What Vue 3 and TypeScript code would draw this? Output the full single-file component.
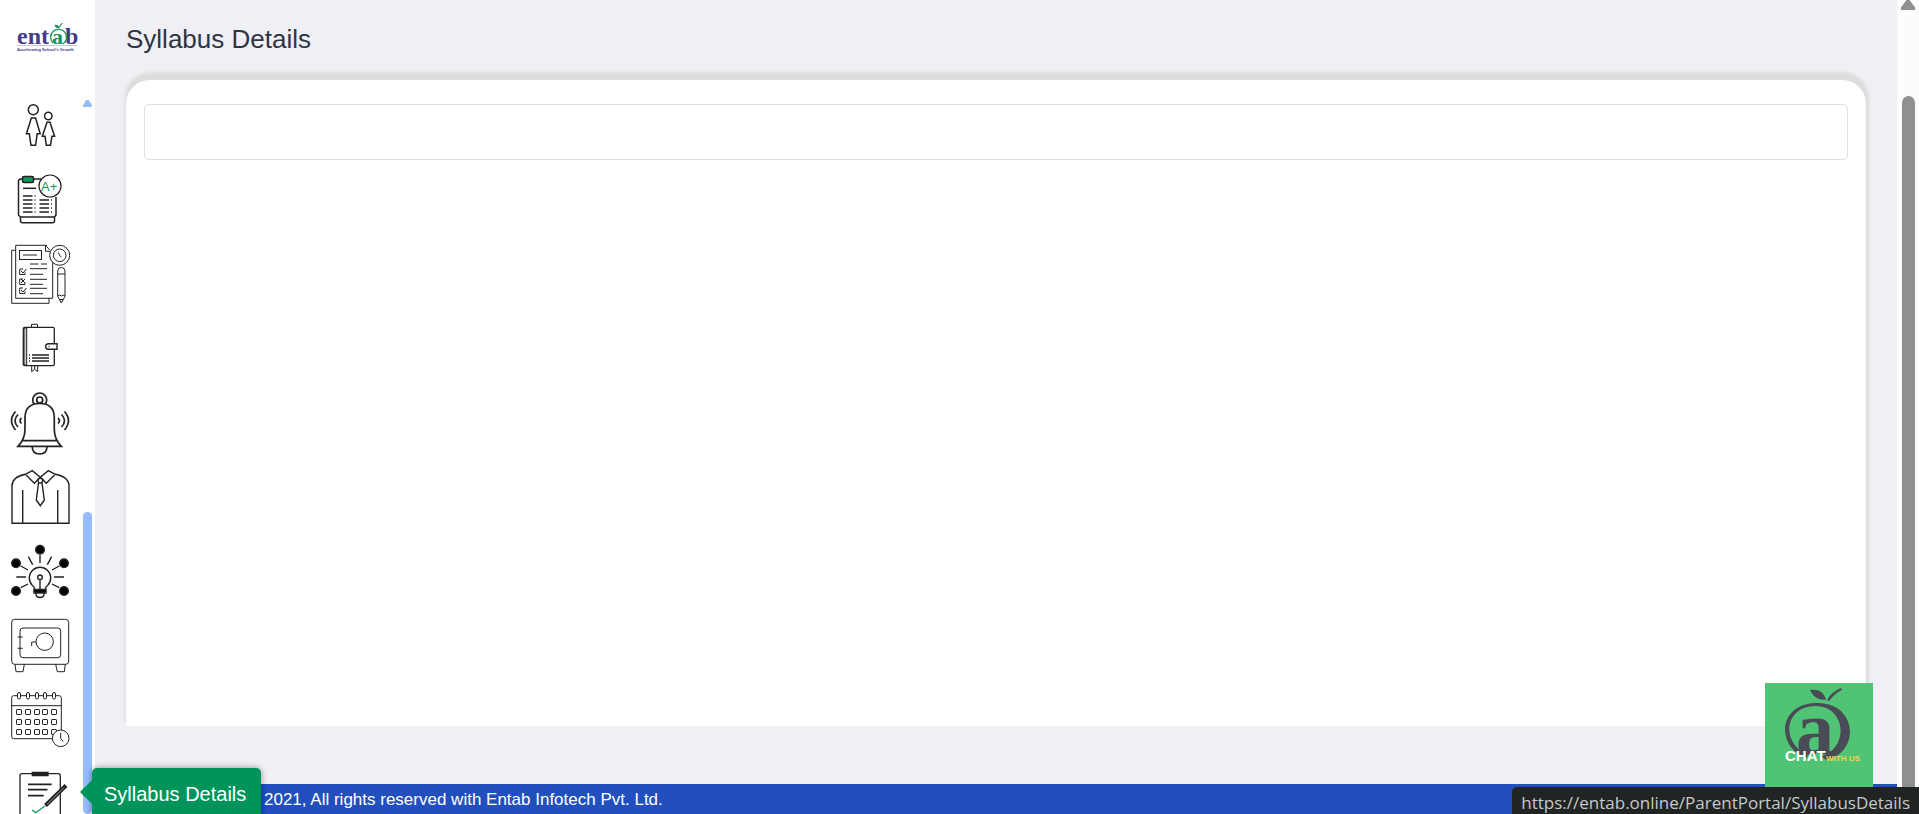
<script setup lang="ts">
interface MenuItem {
  id: string
  label: string
}

const items: MenuItem[] = [
  { id: 'siblings', label: 'Siblings' },
  { id: 'result', label: 'Exam Result' },
  { id: 'schedule', label: 'Exam Schedule' },
  { id: 'diary', label: 'Diary' },
  { id: 'notice', label: 'Notifications' },
  { id: 'uniform', label: 'Uniform' },
  { id: 'ideas', label: 'Activities' },
  { id: 'locker', label: 'Locker' },
  { id: 'calendar', label: 'Calendar' },
  { id: 'syllabus', label: 'Syllabus Details' },
]

const ringX: number[] = [9, 18, 27, 35, 44]
const dayRows: number[] = [28, 38, 48]
const resultRows: number[] = [34, 38, 42, 46, 50]
</script>

<template>
  <div class="portal">
    <aside class="sidebar">
      <a class="logo" href="#" aria-label="Entab home">
        <svg width="64" height="32" viewBox="0 0 64 32">
          <g font-family="'Liberation Serif', serif" font-weight="bold" font-size="24">
            <text x="0" y="21" fill="#463a8c">ent</text>
            <text x="35" y="21" fill="#17955a" font-size="22">a</text>
            <text x="48" y="21" fill="#463a8c">b</text>
          </g>
          <path d="M36 20a8 8 0 1 1 10 1" fill="none" stroke="#17955a" stroke-width="1.3" />
          <path d="M42 5q-4 0-4-3 4 0 4 3q1-4 4-5" fill="#17955a" stroke="#17955a" stroke-width=".8" />
          <path d="M0 22.5h61" stroke="#b5aed6" stroke-width=".7" />
          <text x="0" y="28" fill="#463a8c" font-family="'Liberation Sans', sans-serif" font-weight="bold" font-size="4">Accelerating School's Growth</text>
        </svg>
      </a>
      <nav class="menu">
        <a v-for="item in items" :key="item.id" class="menu-item" href="#" :aria-label="item.label">
          <svg class="icon" viewBox="0 0 60 74">
            <g v-if="item.id === 'siblings'" stroke-width="1.5">
              <circle cx="23.3" cy="21.7" r="5" />
              <path d="M21.3 30h4.3l4.6 15.7h-3l-1.6 11.6H21l-1.7-11.600h-2.800z" />
              <circle cx="38.3" cy="28" r="3.7" />
              <path d="M37 34.300h3l4.600 14H42l-1.500 9h-4.200l-1.300-9h-2.700z" />
            </g>
            <g v-else-if="item.id === 'result'" stroke-width="1.5">
              <path d="M12 17h-1q-2.500 0-2.500 2.500V53l2 2h34l1.500-2V35M24 17h7M10.500 55v4q0 1.700 2 1.700h30q2 0 2-1.700v-4" />
              <rect x="12.5" y="14.5" width="11" height="6" rx="1.5" fill="#0f9659" />
              <path d="M13 26.300h13" />
              <path v-for="(y, i) in resultRows" :key="y" :d="i ? `M13 ${y}h9.500m2 0h1m4 0h9.500m2 0h1` : `M13 ${y}h9.500m2 0h1`" />
              <circle cx="40" cy="24" r="11" fill="#fff" stroke-width="1.2" />
              <text x="31" y="29" class="grade">A+</text>
            </g>
            <g v-else-if="item.id === 'schedule'">
              <path d="M5.700 13.300h-4v53H39v-5M37 8.300H5.700v53h37V20M35.500 8.300v6h5M35.500 8.300l4.500 5" />
              <rect x="9.5" y="13.5" width="22" height="9" />
              <path d="M13 18h14M20 27h8.500m2.500 0h6M20 31.700h17M20 37.300h13M20 42.300h17M20 47.300h13M20 51.300h17M20 56.700h13" />
              <path d="M13 32H9.700v5.500H15v-2M11 34l2 2 3.500-4M13 42H9.700v5.500H15v-2M11 42l4 4m0-4-4 4M13 51H9.700v5.500H15v-2M11 53l2 2 3.500-4" />
              <circle cx="49.7" cy="18.3" r="10" fill="#fff" />
              <circle cx="49.7" cy="18.3" r="6.3" />
              <path d="M48.500 15.500l1 3 2 1.500" />
              <path d="M47.700 59.300V34q0-3.500 3.600-3.500T55 34v25.300L51.300 66zM47.700 37H55M47.700 59l2-1 1.600 1 1.700-1 2 1M50 62.500h3" />
            </g>
            <g v-else-if="item.id === 'diary'">
              <rect x="13.3" y="16.3" width="31" height="38.4" rx="1.5" stroke-width="1.3" />
              <path d="M14 17h2.700v37H14z" fill="#ccc" />
              <path d="M21.500 16v-2.700h6V16M21.700 55v5.700l3-2.500 3 2.500V55M24.700 55v3" />
              <path d="M47 32.700H38.500a2.800 2.800 0 0 0 0 5.600H47z" fill="#fff" stroke-width="1.4" />
              <path d="M38.500 35.500h1M19 44h1m2 0h17M19 47h1m2 0h17M19 50h1m2 0h17" stroke-width="1.3" />
            </g>
            <g v-else-if="item.id === 'notice'" stroke-width="1.7">
              <circle cx="29.7" cy="14" r="7" />
              <path d="M8 60.300q7-7 7-17V32q0-14.500 14.700-14.500T44.300 32v11.300q0 10 7 17zM11.500 54.700h36" fill="#fff" />
              <circle cx="29.7" cy="14" r="3" />
              <path d="M22.300 61q0 7 7.300 7t7.300-7" />
              <path d="M11.500 32q-3 2.700 0 5.500M8 28.500q-6 6.200 0 12.500M5.500 25.500q-8 9 0 18.500M48 32q3 2.700 0 5.500M51.500 28.500q6 6.200 0 12.500M54.500 25.500q8 9 0 18.500" />
            </g>
            <g v-else-if="item.id === 'uniform'" stroke-width="1.4">
              <path d="M15.300 14.300Q2 17 2 26v37.300h57V26q0-9-13.700-11.700M12.700 30v33M47.700 30v33" />
              <path d="M15.300 14.300l7-3.600 8 6.600-6 6zM45.300 14.300l-7-3.600-8 6.600 6 6z" />
              <path d="M30.300 17.300l-2.600 2.500 1 3.200h3.200l1-3.200zM28.500 23l-2.200 17 4 5.700 4-5.700-2.300-17" />
            </g>
            <g v-else-if="item.id === 'ideas'" stroke-width="1.4">
              <g fill="#000">
                <circle cx="30" cy="14.7" r="4.3" />
                <circle cx="6" cy="28.3" r="4.3" />
                <circle cx="54" cy="28.3" r="4.3" />
                <circle cx="6" cy="56" r="4.3" />
                <circle cx="54" cy="56" r="4.3" />
                <path d="M24 54.500h12v3.500H24z" />
              </g>
              <path d="M30 20v8M18.300 21.700l4.400 8M41.700 21.700l-4.400 8M10.700 31l7.300 4M49.300 31 42 35M6.300 42H16M44 42h10M10.700 52.700 18 49M49.300 52.700 42 49" />
              <path d="M24.500 54q0-2-2.500-4a10.700 10.700 0 1 1 16 0q-2.500 2-2.500 4M26 58.500q0 4 4 4t4-4M30 45v9" />
              <circle cx="30" cy="42.3" r="2.3" />
            </g>
            <g v-else-if="item.id === 'locker'">
              <rect x="1.7" y="10.3" width="57" height="45" rx="3" />
              <rect x="10" y="19" width="40.7" height="29.7" rx="3" />
              <circle cx="34.7" cy="32.7" r="8.7" />
              <path d="M21.700 37v-4H26M7.700 28h5M7.700 39.300h5M5 55.300l1 7.400h7l1.300-7.400M45.700 55.300l1.600 7.400h7l1-7.400" />
            </g>
            <g v-else-if="item.id === 'calendar'">
              <rect x="1.7" y="11.7" width="49.6" height="43" rx="2" />
              <path d="M1.700 21.700h49.600" />
              <rect v-for="x in ringX" :key="x" :x="x - 1.5" y="8.5" width="3" height="6.5" rx="1.5" fill="#fff" />
              <template v-for="y in dayRows" :key="y">
                <rect v-for="x in ringX" :key="x" :x="x - 2.5" :y="y - 2.5" width="5" height="5" rx=".6" />
              </template>
              <circle cx="50.7" cy="54.3" r="8.3" fill="#fff" />
              <path d="M50.700 49v5.500l2.500 3" />
            </g>
            <g v-else stroke-width="1.3">
              <rect x="10" y="15.7" width="40.3" height="54" rx="2" />
              <path d="M22.300 14.500H38v3H22.300z" fill="#222" />
              <path d="M18 26.300h23.700M18 31.700h19.500M18 37.700h15.700" stroke-width="1.7" />
              <path d="M22.300 52l3.400 2.700L35 48" stroke="#0f9659" />
              <path d="M35.500 47.500 56 27.500" stroke-width="4" />
              <path d="M37 46.500 54 29.500" stroke="#999" stroke-width="1" />
            </g>
          </svg>
        </a>
      </nav>
      <div class="side-scroll">
        <span class="side-up"></span>
        <span class="side-thumb"></span>
      </div>
    </aside>

    <div class="content">
      <main class="page">
        <h1>Syllabus Details</h1>
        <section class="card">
          <div class="panel"></div>
        </section>
      </main>
      <footer>2021, All rights reserved with Entab Infotech Pvt. Ltd.</footer>
    </div>

    <div class="page-scroll">
      <span class="page-up"></span>
      <span class="page-thumb"></span>
    </div>

    <div class="tooltip" role="tooltip">Syllabus Details</div>

    <button class="chat" type="button" aria-label="Chat with us">
      <svg width="108" height="104" viewBox="0 0 108 104">
        <path fill="#494c57" fill-rule="evenodd" d="M42 75C12 66 11 22 50 20c43-2 46 50 11 57l-5-4c28-7 26-50-6-50-33 1-33 40-7 48z" />
        <path d="M45 7c7-1 14 1 16 10-7 0-13-3-16-10zM62 17q4-8 14-12l1 2q-7 3-13 11z" fill="#494c57" />
        <text x="31" y="71" class="chat-a">a</text>
        <text x="20" y="78" class="chat-main">CHAT</text>
        <text x="61" y="78" class="chat-sub">WITH US</text>
      </svg>
    </button>

    <div class="status">https://entab.online/ParentPortal/SyllabusDetails</div>
  </div>
</template>

<style>
body {
  margin: 0;
  overflow: hidden;
}
</style>

<style scoped>
.portal {
  position: relative;
  display: flex;
  height: 100vh;
  overflow: hidden;
  background: #f0eff5;
  font-family: 'Liberation Sans', Arial, sans-serif;
}

.sidebar {
  flex: none;
  display: grid;
  grid-template-columns: 83px 12px;
  grid-template-rows: 88px minmax(0, 1fr);
  background: #fff;
}

.logo {
  grid-column: 1 / 3;
  padding: 23px 0 0 17px;
}

.logo svg {
  display: block;
}

.menu {
  display: grid;
  grid-auto-rows: 74px 75px;
  align-content: start;
  overflow: hidden;
  padding-left: 10px;
}

.menu-item {
  display: block;
}

.icon {
  display: block;
  width: 60px;
  height: 74px;
  fill: none;
  stroke: #222;
  stroke-width: 1;
}

.grade {
  fill: #0f9659;
  stroke: #0f9659;
  stroke-width: 0;
  font-size: 13px;
}

.side-scroll {
  display: flex;
  flex-direction: column;
  width: 9px;
  padding-top: 12px;
}

.side-up {
  height: 7px;
  background: #95bcfd;
  clip-path: polygon(35% 0, 65% 0, 100% 75%, 100% 100%, 0 100%, 0 75%);
}

.side-thumb {
  height: 302px;
  margin-top: auto;
  border-radius: 5px;
  background: #95bcfd;
}

.content {
  flex: 1;
  min-width: 0;
  display: flex;
  flex-direction: column;
}

.page {
  flex: 1;
  display: flex;
  flex-direction: column;
  padding: 0 31px 58px;
  overflow: hidden;
}

h1 {
  margin: 0;
  padding: 24px 0 26px;
  color: #2f3542;
  font-size: 26px;
  font-weight: 400;
  line-height: 30px;
}

.card {
  flex: 1;
  padding: 24px 18px;
  border-radius: 24px 24px 0 0;
  background: #fff;
  box-shadow: 1px -6px 3px 2px #dddddd;
  clip-path: inset(-12px -12px 0 -12px);
}

.panel {
  height: 54px;
  border: 1px solid #dedfe2;
  border-radius: 5px;
}

footer {
  padding: 2px 0 0 169px;
  background: #224fbe;
  color: #fff;
  font-size: 17px;
  line-height: 28px;
}

.page-scroll {
  flex: none;
  display: flex;
  flex-direction: column;
  align-items: center;
  width: 22px;
  background: #fcfcfc;
}

.page-up {
  width: 15px;
  height: 10px;
  background: #909090;
  clip-path: polygon(40% 0, 60% 0, 100% 80%, 95% 100%, 5% 100%, 0 80%);
}

.page-thumb {
  flex: 1;
  width: 13px;
  margin-top: 86px;
  border-radius: 7px 7px 0 0;
  background: #909090;
}

.tooltip {
  position: absolute;
  left: 92px;
  bottom: -6px;
  padding: 0 15px 0 12px;
  border-radius: 5px;
  background: #00945a;
  box-shadow: 0 0 6px rgba(0, 0, 0, 0.4);
  color: #fff;
  font-size: 20px;
  line-height: 52px;
}

.tooltip::before {
  content: '';
  position: absolute;
  left: -12px;
  top: 12px;
  border: solid transparent;
  border-width: 12px 12px 12px 0;
  border-right-color: #00945a;
}

.chat {
  position: absolute;
  right: 46px;
  bottom: 27px;
  padding: 0;
  border: 0;
  background: #50c375;
}

.chat svg {
  display: block;
}

.chat-a {
  fill: #494c57;
  font: bold 76px 'Liberation Serif', serif;
}

.chat-main {
  fill: #fff;
  font: bold 15px 'Liberation Sans', sans-serif;
}

.chat-sub {
  fill: #efd84b;
  font: bold 8px 'Liberation Sans', sans-serif;
}

.status {
  position: absolute;
  right: 0;
  bottom: 0;
  padding: 5px 9px 0;
  border-radius: 5px 0 0 0;
  background: #202423;
  color: #c8c9c8;
  font-family: 'Open Sans', 'Noto Sans', sans-serif;
  font-size: 17px;
  line-height: 22px;
}
</style>
